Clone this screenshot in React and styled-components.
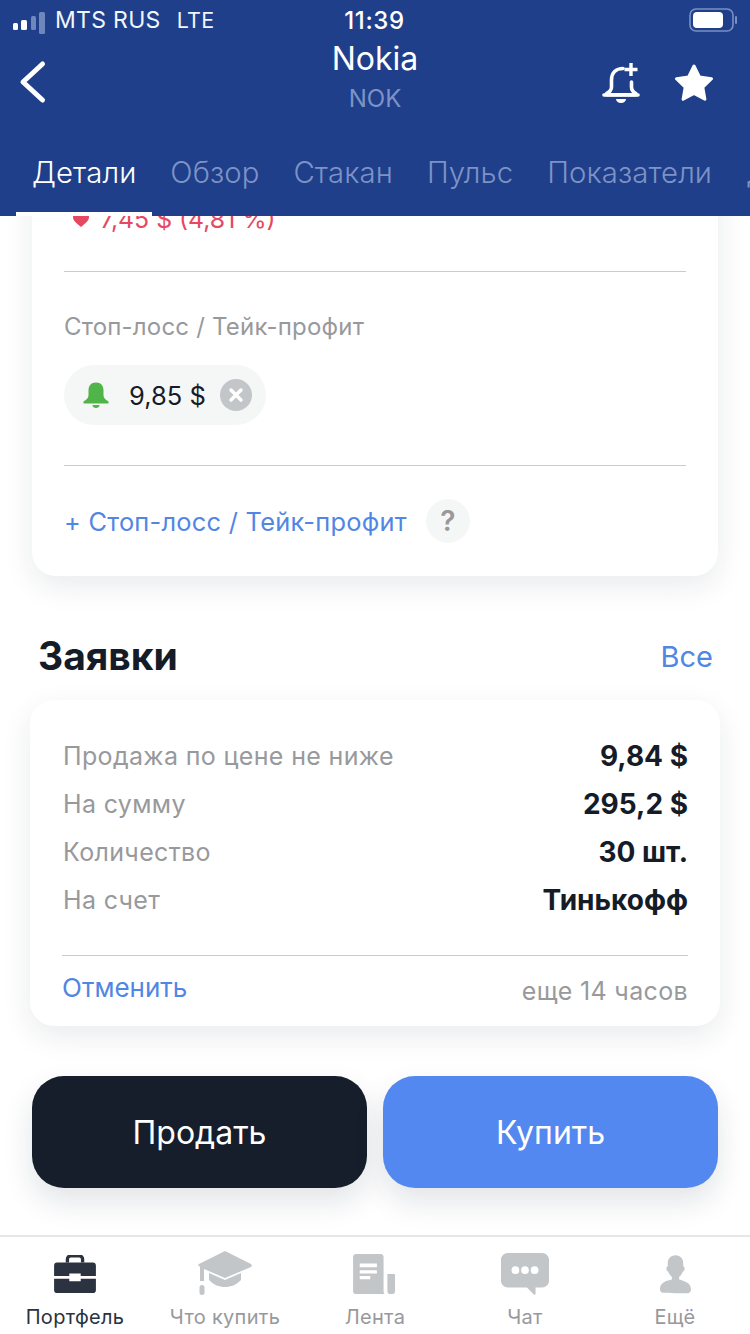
import React from "react";
import styled, { createGlobalStyle } from "styled-components";

const Global = createGlobalStyle`
  html, body { margin: 0; padding: 0; background: #fff; }
  * { box-sizing: border-box; }
  body { font-family: Inter, "Noto Sans", sans-serif; -webkit-font-smoothing: antialiased; }
`;

const Page = styled.div`
  width: 750px; height: 1334px; display: flex; flex-direction: column; overflow: hidden; background: #fff;
`;
const Header = styled.header`
  height: 216px; flex: none; background: #1f3f8b; color: #fff; position: relative; z-index: 2; overflow: hidden;
  display: flex; flex-direction: column;
`;
const StatusBar = styled.div`
  height: 40px; display: grid; grid-template-columns: 1fr auto 1fr; align-items: center; padding: 0 13px;
`;
const StatusLeft = styled.div`
  display: flex; align-items: center; font-size: 23px; letter-spacing: 0.3px; color: #f2f5fb;
`;
const Carrier = styled.span` margin-left: 8px; `;
const Lte = styled.span` margin-left: 16px; font-size: 21.5px; `;
const Clock = styled.div` font-size: 24px; font-weight: 500; letter-spacing: 0.6px; margin-left: -1px; `;
const StatusRight = styled.div` display: flex; justify-content: flex-end; margin-right: -2px; `;
const NavRow = styled.div`
  height: 76px; display: grid; grid-template-columns: 1fr auto 1fr; align-items: start; padding: 0 18px;
`;
const BackButton = styled.div` padding-top: 20px; margin-left: 1px; display: flex; `;
const TitleBlock = styled.div` display: flex; flex-direction: column; align-items: center; `;
const Title = styled.div` font-size: 32px; line-height: 38px; `;
const Ticker = styled.div` font-size: 24px; line-height: 30px; margin-top: 6px; color: #7d93c5; `;
const NavActions = styled.div` display: flex; justify-content: flex-end; align-items: center; gap: 34px; padding: 22px 18px 0 0; `;
const Tabs = styled.nav`
  display: flex; gap: 34px; padding: 37px 0 0 32px; white-space: nowrap; font-size: 29.3px; line-height: 40px; letter-spacing: 0.1px;
`;
const Tab = styled.span`
  color: ${p => (p.$active ? "#fff" : "#7d93c5")}; font-weight: 300; flex: none;
  position: relative;
  ${p => p.$active && `
    &::after { content: ""; position: absolute; left: -16px; width: 136px; height: 4px; top: 59px; background: #fff; }
  `}
`;

const Scroll = styled.main` flex: 1; min-height: 0; overflow: hidden; display: flex; flex-direction: column; `;
const Card = styled.section`
  background: #fff; box-shadow: 0 10px 30px rgba(20, 30, 50, 0.09);
`;
const PositionCard = styled(Card)`
  margin: -80px 32px 0; padding: 0 32px; border-radius: 0 0 24px 24px; height: 440px; display: flex; flex-direction: column;
`;
const LossLine = styled.div`
  height: 135px; flex: none; padding-top: 68px; font-size: 24.8px; line-height: 30px; color: #e5485f; display: flex; align-items: flex-start; gap: 10px; padding-left: 8px;
`;
const Divider = styled.div` height: 1px; background: #c9cbce; flex: none; `;
const Label = styled.div` font-size: 24px; line-height: 30px; color: #98999c; margin-top: 40px; letter-spacing: 0.2px; `;
const Chip = styled.div`
  width: 202px; height: 60px; border-radius: 30px; background: #f5f7f7; margin-top: 23px; margin-bottom: 40px;
  display: flex; align-items: center; padding: 0 14px 0 18px; font-size: 25.5px; color: #151c28;
`;
const ChipValue = styled.span` margin-left: 19px; flex: 1; `;
const ClearDot = styled.span`
  width: 32px; height: 32px; border-radius: 50%; background: #c3c6c9; display: flex; align-items: center; justify-content: center;
`;
const LinkRow = styled.div` display: flex; align-items: center; margin-top: 33px; gap: 19px; `;
const AddLink = styled.span` font-size: 25.4px; color: #5286e4; letter-spacing: 0.25px; `;
const Help = styled.span`
  width: 44px; height: 44px; border-radius: 50%; background: #f5f7f7; color: #98999c; font-size: 28px; font-weight: 600;
  display: flex; align-items: center; justify-content: center;
`;
const SectionHead = styled.div`
  display: flex; align-items: center; justify-content: space-between; padding: 0 37px 0 38px; margin-top: 55px; height: 48px; flex: none;
`;
const SectionTitle = styled.h2` margin: 0; font-size: 39px; font-weight: 700; color: #151c28; `;
const AllLink = styled.span` font-size: 29px; color: #5286e4; margin-top: 2px; `;
const OrderCard = styled(Card)`
  margin: 21px 30px 0; height: 326px; border-radius: 24px; padding: 32px 32px 0 32px; flex: none; display: flex; flex-direction: column;
`;
const Rows = styled.div` height: 224px; flex: none; border-bottom: 1px solid #c9cbce; display: flex; flex-direction: column; `;
const Row = styled.div` height: 48px; display: flex; align-items: center; justify-content: space-between; flex: none; padding-left: 1px; `;
const RowLabel = styled.span` font-size: 25px; color: #98999c; letter-spacing: 0.35px; `;
const RowValue = styled.span` font-size: 28px; font-weight: 700; color: #151c28; `;
const CardFoot = styled.div` display: flex; justify-content: space-between; padding: 16px 0 0 0; `;
const CancelLink = styled.span` font-size: 26px; color: #5286e4; `;
const Remaining = styled.span` font-size: 25px; color: #98999c; margin-top: 4px; letter-spacing: 0.35px; `;
const Actions = styled.div` display: grid; grid-template-columns: 1fr 1fr; gap: 16px; margin: 50px 32px 0; flex: none; `;
const ActionButton = styled.button`
  height: 112px; border: 0; border-radius: 32px; color: #fff; font: 400 32px Inter, sans-serif;
  background: ${p => (p.$primary ? "#5388f0" : "#161e2b")};
  box-shadow: 0 14px 30px rgba(20, 30, 50, 0.12);
`;
const TabBar = styled.footer`
  height: 99px; flex: none; border-top: 2px solid #e5e6e7; background: #fff; display: grid; grid-template-columns: repeat(5, 150px); position: relative; z-index: 2;
`;
const BarItem = styled.div`
  display: flex; flex-direction: column; align-items: center; padding-top: 12px;
  color: ${p => (p.$active ? "#2b3240" : "#98999c")};
`;
const BarIcon = styled.div` height: 50px; display: flex; align-items: center; justify-content: center; `;
const BarLabel = styled.span` font-size: 20px; line-height: 24px; margin-top: 6px; letter-spacing: 0.3px; `;

const Signal = () => (
  <svg width="34" height="32" viewBox="0 0 34 32">
    <rect x="0" y="19" width="5" height="7" rx="1.5" fill="#fff" />
    <rect x="8" y="16" width="6" height="10" rx="1.5" fill="#fff" />
    <rect x="18" y="12" width="5" height="14" rx="1.5" fill="#6f87bd" />
    <rect x="26" y="8" width="6" height="22" rx="1.5" fill="#6f87bd" />
  </svg>
);
const Battery = () => (
  <svg width="50" height="24" viewBox="0 0 50 24">
    <rect x="1" y="1" width="43" height="22" rx="6" fill="none" stroke="#7a90c4" strokeWidth="1.6" />
    <rect x="4" y="4" width="30" height="16" rx="4" fill="#fff" />
    <rect x="46" y="8" width="2" height="8" rx="1" fill="#7a90c4" />
  </svg>
);
const Back = () => (
  <svg width="28" height="44" viewBox="0 0 28 44">
    <path d="M23.500 4 L4 22 L23.500 40" fill="none" stroke="#fff" strokeWidth="5" strokeLinecap="round" strokeLinejoin="round" />
  </svg>
);
const BellPlus = () => (
  <svg width="38" height="42" viewBox="0 0 38 42" fill="none">
    <path d="M21 6.5C14 6.5 9.5 11 9.5 18v7c0 3-2 5-5 6.5v1.2h29.5v-1.2c-3-1.5-4.5-3.5-4.5-6.5v-5" stroke="#fff" strokeWidth="3.6" strokeLinejoin="round" strokeLinecap="round" />
    <path d="M2 33h34" stroke="#fff" strokeWidth="3.6" strokeLinecap="round" />
    <path d="M14 37h10c0 2.2-2 4-5 4s-5-1.8-5-4z" fill="#fff" />
    <path d="M29 1v13M22.5 7.5h13" stroke="#fff" strokeWidth="3.4" />
  </svg>
);
const Star = () => (
  <svg width="40" height="38" viewBox="0 0 40 38">
    <path d="M20 2 L25.4 13 L37.5 14.7 L28.8 23.2 L30.9 35.2 L20 29.5 L9.1 35.2 L11.2 23.2 L2.5 14.7 L14.6 13 Z" fill="#fff" stroke="#fff" strokeWidth="3" strokeLinejoin="round" />
  </svg>
);
const Heart = () => (
  <svg width="18" height="16" viewBox="0 0 18 16" style={{ marginTop: 8 }}>
    <path d="M9 15 C3 10 1 8 1 5 C1 2 3 1 5 1 C7 1 8 2 9 3 C10 2 11 1 13 1 C15 1 17 2 17 5 C17 8 15 10 9 15Z" fill="#e5485f" />
  </svg>
);
const GreenBell = () => (
  <svg width="28" height="28" viewBox="0 0 28 28">
    <path d="M14 1.5c-5 0-7.500 3.500-7.500 8v5c0 2.500-2.500 4.500-5 6V22.500h25V20.500c-2.500-1.500-5-3.500-5-6v-5c0-4.500-2.500-8-7.500-8z" fill="#4fb548" />
    <path d="M10.500 24h7c0 2-1.500 3-3.500 3s-3.500-1-3.500-3z" fill="#4fb548" />
  </svg>
);
const Cross = () => (
  <svg width="16" height="16" viewBox="0 0 16 16">
    <path d="M3 3L13 13M13 3L3 13" stroke="#fff" strokeWidth="3.4" strokeLinecap="round" />
  </svg>
);
const Briefcase = () => (
  <svg width="44" height="38" viewBox="0 0 46 40">
    <path d="M15 8V4.500C15 2.500 16.500 1 18.500 1h9c2 0 3.500 1.500 3.500 3.500V8" fill="none" stroke="#2b3240" strokeWidth="3.500" />
    <path d="M4 8h38c1.700 0 3 1.300 3 3v11H29v-2.500h-12V22H1V11c0-1.700 1.300-3 3-3z" fill="#2b3240" />
    <path d="M1 25h16v2.500h12V25h16v12c0 1.700-1.300 3-3 3H4c-1.700 0-3-1.300-3-3z" fill="#2b3240" />
  </svg>
);
const GRAY = "#c3c6c9";
const Cap = () => (
  <svg width="54" height="46" viewBox="0 0 54 46">
    <path d="M27 0 L53 13 C54 14 54 15 53 16 L27 27 L6 18 L6 30 L2 30 L2 16 L1 15 C0 14 0 13 1 13 Z" fill={GRAY} />
    <path d="M11 22 L27 29 L43 22 L43 29 C38 34 33 36 27 36 C21 36 16 34 11 29 Z" fill={GRAY} />
    <rect x="1.500" y="34" width="5" height="10" rx="2.500" fill={GRAY} />
  </svg>
);
const News = () => (
  <svg width="44" height="40" viewBox="0 0 46 42">
    <path d="M3 0h26c1.700 0 3 1.300 3 3v36c0 1 .4 2 1 3H3c-1.700 0-3-1.300-3-3V3C0 1.300 1.300 0 3 0z" fill={GRAY} />
    <path d="M7 10h18v4H7zM7 17h18v3.500H7zM7 23h11v3.500H7z" fill="#fff" />
    <path d="M36 21h8v18c0 1.700-1.300 3-3 3h-3c-1.500-1-2-2-2-3z" fill={GRAY} />
  </svg>
);
const Chat = () => (
  <svg width="48" height="44" viewBox="0 0 50 44">
    <path d="M7 0h36c3.500 0 7 3 7 7v22c0 4-3.500 7-7 7H36l0 6c0 2-1 2-2 1l-7-7H7c-3.500 0-7-3-7-7V7c0-4 3.500-7 7-7z" fill={GRAY} />
    <circle cx="15" cy="18" r="4" fill="#fff" />
    <circle cx="25" cy="18" r="4" fill="#fff" />
    <circle cx="35" cy="18" r="4" fill="#fff" />
  </svg>
);
const Person = () => (
  <svg width="31" height="41" viewBox="0 0 34 42">
    <path d="M17 0c5.500 0 8.500 4 8.500 9v3c2 .5 2 5-.5 6-1 2.500-2.500 4.500-4 5.500v3c5 1.500 13 3.500 13 10.500 0 2.500-1 4-3 4.500C26 41.500 8 41.500 3 41C1 40.500 0 39 0 36.500 0 29.500 8 27.500 13 26.500v-3c-1.500-1-3-3-4-5.500-2.500-1-2.500-5.500-.5-6V9C8.500 4 11.500 0 17 0z" fill={GRAY} />
  </svg>
);

const rows = [
  ["Продажа по цене не ниже", "9,84 $"],
  ["На сумму", "295,2 $"],
  ["Количество", "30 шт."],
  ["На счет", "Тинькофф"],
];
const tabs = ["Детали", "Обзор", "Стакан", "Пульс", "Показатели", "Дивиденды"];
const bar = [
  ["Портфель", <Briefcase key="b" />, true],
  ["Что купить", <Cap key="c" />],
  ["Лента", <News key="n" />],
  ["Чат", <Chat key="t" />],
  ["Ещё", <Person key="p" />],
];

export default function App() {
  return (
    <Page>
      <Global />
      <Header>
        <StatusBar>
          <StatusLeft><Signal /><Carrier>MTS RUS</Carrier><Lte>LTE</Lte></StatusLeft>
          <Clock>11:39</Clock>
          <StatusRight><Battery /></StatusRight>
        </StatusBar>
        <NavRow>
          <BackButton><Back /></BackButton>
          <TitleBlock><Title>Nokia</Title><Ticker>NOK</Ticker></TitleBlock>
          <NavActions><BellPlus /><Star /></NavActions>
        </NavRow>
        <Tabs>
          {tabs.map((t, i) => <Tab key={t} $active={i === 0}>{t}</Tab>)}
        </Tabs>
      </Header>
      <Scroll>
        <PositionCard>
          <LossLine><Heart /><span>7,45 $ (4,81 %)</span></LossLine>
          <Divider />
          <Label>Стоп-лосс / Тейк-профит</Label>
          <Chip><GreenBell /><ChipValue>9,85 $</ChipValue><ClearDot><Cross /></ClearDot></Chip>
          <Divider />
          <LinkRow><AddLink>+ Стоп-лосс / Тейк-профит</AddLink><Help>?</Help></LinkRow>
        </PositionCard>
        <SectionHead><SectionTitle>Заявки</SectionTitle><AllLink>Все</AllLink></SectionHead>
        <OrderCard>
          <Rows>
            {rows.map(([l, v]) => <Row key={l}><RowLabel>{l}</RowLabel><RowValue>{v}</RowValue></Row>)}
          </Rows>
          <CardFoot><CancelLink>Отменить</CancelLink><Remaining>еще 14 часов</Remaining></CardFoot>
        </OrderCard>
        <Actions>
          <ActionButton>Продать</ActionButton>
          <ActionButton $primary>Купить</ActionButton>
        </Actions>
      </Scroll>
      <TabBar>
        {bar.map(([l, icon, active]) => (
          <BarItem key={l} $active={active}><BarIcon>{icon}</BarIcon><BarLabel>{l}</BarLabel></BarItem>
        ))}
      </TabBar>
    </Page>
  );
}
